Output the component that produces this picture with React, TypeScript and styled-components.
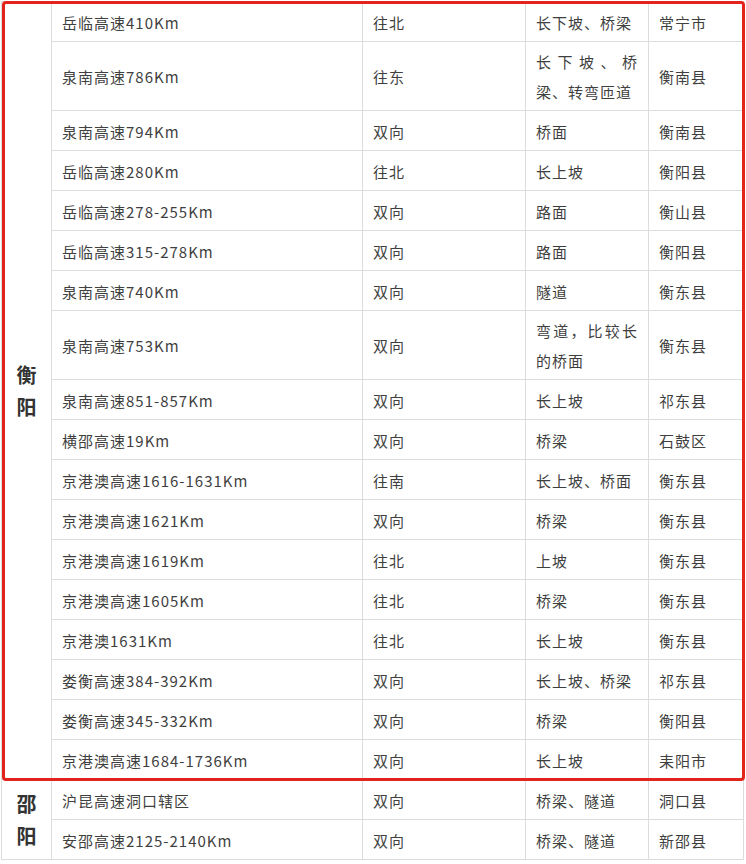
import styled, { createGlobalStyle } from 'styled-components';

const GlobalStyle = createGlobalStyle`
  html, body {
    margin: 0;
    padding: 0;
    background: #fff;
  }
  body {
    font-family: "Noto Sans CJK SC", "Noto Sans", sans-serif;
  }
`;

const Page = styled.div`
  position: relative;
  padding: 1px 0 0 1px;
  width: 746px;
  box-sizing: border-box;
`;

const Table = styled.table`
  border-collapse: collapse;
  table-layout: fixed;
  width: 743px;
  color: #3f3f3f;
  font-size: 15px;
  letter-spacing: 1px;
`;

const Col = styled.col<{ $w: number }>`
  width: ${(p) => p.$w}px;
`;

const Row = styled.tr<{ $tall?: boolean }>`
  height: ${(p) => (p.$tall ? 69 : 40)}px;
`;

const Cell = styled.td<{ $justify?: boolean }>`
  border: 1px solid #dcdcdc;
  padding: 5px 10px 3px;
  line-height: 30px;
  vertical-align: middle;
  text-align: ${(p) => (p.$justify ? 'justify' : 'left')};
`;

const CityCell = styled.td`
  border: 1px solid #dcdcdc;
  padding: 0 10px;
  font-size: 20px;
  font-weight: bold;
  color: #333;
  line-height: 32px;
  letter-spacing: 0;
  vertical-align: middle;
  text-align: center;
`;

// red annotation frame drawn over the 衡阳 group
const Highlight = styled.div`
  position: absolute;
  left: 2px;
  top: 1px;
  width: 743px;
  height: 780px;
  box-sizing: border-box;
  border: 3px solid #e3241c;
  border-radius: 4px;
  pointer-events: none;
`;

type Item = [string, string, string, string, boolean?];

const hengyang: Item[] = [
  ['岳临高速410Km', '往北', '长下坡、桥梁', '常宁市'],
  ['泉南高速786Km', '往东', '长下坡、桥梁、转弯匝道', '衡南县', true],
  ['泉南高速794Km', '双向', '桥面', '衡南县'],
  ['岳临高速280Km', '往北', '长上坡', '衡阳县'],
  ['岳临高速278-255Km', '双向', '路面', '衡山县'],
  ['岳临高速315-278Km', '双向', '路面', '衡阳县'],
  ['泉南高速740Km', '双向', '隧道', '衡东县'],
  ['泉南高速753Km', '双向', '弯道，比较长的桥面', '衡东县', true],
  ['泉南高速851-857Km', '双向', '长上坡', '祁东县'],
  ['横邵高速19Km', '双向', '桥梁', '石鼓区'],
  ['京港澳高速1616-1631Km', '往南', '长上坡、桥面', '衡东县'],
  ['京港澳高速1621Km', '双向', '桥梁', '衡东县'],
  ['京港澳高速1619Km', '往北', '上坡', '衡东县'],
  ['京港澳高速1605Km', '往北', '桥梁', '衡东县'],
  ['京港澳1631Km', '往北', '长上坡', '衡东县'],
  ['娄衡高速384-392Km', '双向', '长上坡、桥梁', '祁东县'],
  ['娄衡高速345-332Km', '双向', '桥梁', '衡阳县'],
  ['京港澳高速1684-1736Km', '双向', '长上坡', '耒阳市'],
];

const shaoyang: Item[] = [
  ['沪昆高速洞口辖区', '双向', '桥梁、隧道', '洞口县'],
  ['安邵高速2125-2140Km', '双向', '桥梁、隧道', '新邵县'],
];

const groups = [
  { city: '衡阳', items: hengyang },
  { city: '邵阳', items: shaoyang },
];

const widths = [50, 311, 163, 123, 95];

export default function App() {
  return (
    <Page>
      <GlobalStyle />
      <Table>
        <colgroup>
          {widths.map((w, i) => (
            <Col key={i} $w={w} />
          ))}
        </colgroup>
        <tbody>
          {groups.map((g) =>
            g.items.map(([road, dir, spot, area, tall], i) => (
              <Row key={g.city + i} $tall={tall}>
                {i === 0 && <CityCell rowSpan={g.items.length}>{g.city}</CityCell>}
                <Cell>{road}</Cell>
                <Cell>{dir}</Cell>
                <Cell $justify>{spot}</Cell>
                <Cell>{area}</Cell>
              </Row>
            ))
          )}
        </tbody>
      </Table>
      <Highlight />
    </Page>
  );
}
